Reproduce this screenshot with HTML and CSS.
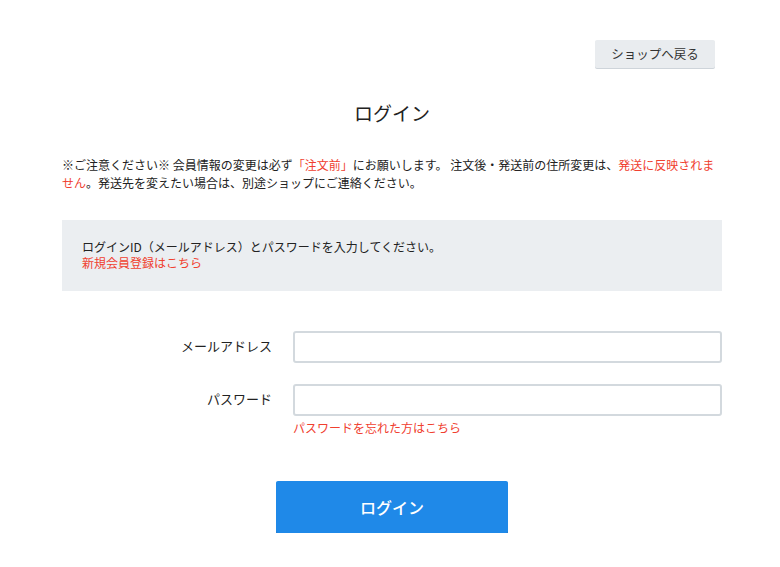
FILE: index.html
```html
<!DOCTYPE html>
<html lang="ja">
<head>
<meta charset="utf-8">
<link rel="stylesheet" href="styles.css">
</head>
<body>
<div class="page">
  <div class="topbar">
    <a class="back-btn" href="#">ショップへ戻る</a>
  </div>
  <h1 class="title">ログイン</h1>
  <p class="notice">※ご注意ください※ 会員情報の変更は必ず<span class="red">「注文前」</span>にお願いします。 注文後・発送前の住所変更は、<span class="red">発送に反映されま</span><br><span class="red">せん</span>。発送先を変えたい場合は、別途ショップにご連絡ください。</p>
  <div class="info-box">
    <p>ログインID（メールアドレス）とパスワードを入力してください。</p>
    <a class="red" href="#">新規会員登録はこちら</a>
  </div>
  <form class="form">
    <div class="row">
      <label class="label">メールアドレス</label>
      <div class="field"><input class="input" type="text"></div>
    </div>
    <div class="row">
      <label class="label">パスワード</label>
      <div class="field">
        <input class="input" type="password">
        <a class="red forgot" href="#">パスワードを忘れた方はこちら</a>
      </div>
    </div>
    <div class="submit-row">
      <button class="login-btn" type="button">ログイン</button>
    </div>
  </form>
</div>
</body>
</html>
```

FILE: styles.css
```css
* { box-sizing: border-box; }
html, body { margin: 0; padding: 0; background: #fff; }
body {
  font-family: "Noto Sans CJK JP", "Noto Sans", sans-serif;
  color: #333;
  font-size: 12px;
}
.page {
  width: 660px;
  margin-left: 62px;
  padding-top: 40px;
}
.topbar {
  display: flex;
  justify-content: flex-end;
  padding-right: 7px;
}
.back-btn {
  display: block;
  width: 120px;
  height: 28px;
  line-height: 28px;
  text-align: center;
  background: #e9ecef;
  border-radius: 2px;
  box-shadow: 0 1px 0 #ced4da;
  color: #333;
  text-decoration: none;
  font-size: 12.5px;
}
.title {
  margin: 30px 0 0;
  text-align: center;
  font-size: 19px;
  font-weight: normal;
  line-height: 30px;
  color: #222;
}
.notice {
  margin: 28px 0 0;
  font-size: 12px;
  line-height: 18px;
  color: #222;
}
.red { color: #f0402f; text-decoration: none; }
.info-box {
  margin-top: 28px;
  height: 71px;
  background: #ebeef1;
  padding: 19px 20px 0;
  line-height: 16px;
  color: #222;
}
.info-box p { margin: 0; }
.form { margin-top: 40px; }
.row {
  display: flex;
  align-items: flex-start;
  margin-bottom: 21px;
}
.label {
  width: 210px;
  text-align: right;
  padding-top: 7px;
  line-height: 16px;
  font-size: 13px;
  color: #222;
}
.field {
  margin-left: 21px;
  flex: 1;
}
.input {
  display: block;
  width: 429px;
  height: 32px;
  border: 2px solid #d3d9de;
  border-radius: 3px;
  background: #fff;
}
.forgot {
  display: block;
  margin-top: 4px;
  line-height: 16px;
  font-size: 12px;
}
.submit-row {
  display: flex;
  padding-left: 214px;
  margin-top: 45px;
}
.login-btn {
  width: 232px;
  height: 52px;
  background: #1f89e8;
  border: none;
  border-radius: 2px;
  box-shadow: 0 1px 0 #1a6fc0;
  color: #fff;
  font-family: "Noto Sans CJK JP", sans-serif;
  font-size: 16px;
  font-weight: 500;
}
```
